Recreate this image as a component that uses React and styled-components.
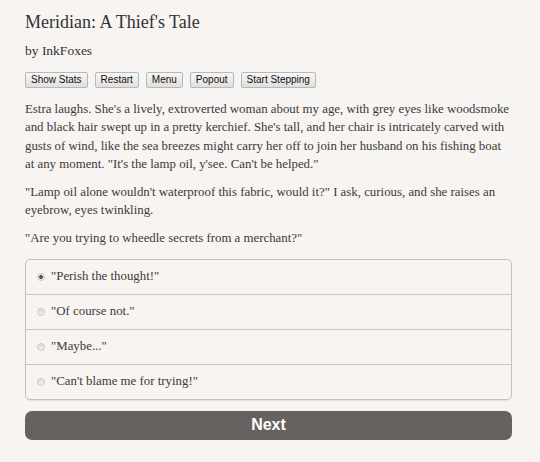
import React from "react";
import styled, { createGlobalStyle } from "styled-components";

const Global = createGlobalStyle`
  html, body { margin: 0; padding: 0; background: #f7f4f1; }
  body { font-family: "Liberation Serif", "Times New Roman", serif; color: #3b3b3b; }
`;

const Page = styled.div`
  padding: 10px 28px 0 25px;
  width: 487px;
`;

const Title = styled.h1`
  font-weight: normal;
  font-size: 18px;
  margin: 0;
  line-height: 24px;
  color: #333;
`;

const Author = styled.h2`
  font-weight: normal;
  font-size: 13.5px;
  margin: 8px 0 0;
  line-height: 18px;
  color: #333;
`;

const Toolbar = styled.div`
  display: flex;
  gap: 7px;
  margin-top: 12px;
`;

const ToolButton = styled.button`
  font-family: "Liberation Sans", Arial, sans-serif;
  font-size: 10px;
  color: #111;
  background: linear-gradient(#f7f7f7, #dfdfdf);
  border: 1px solid #b8b8b8;
  border-radius: 2px;
  padding: 0 5px;
  height: 16px;
  line-height: 14px;
`;

const Para = styled.p`
  font-size: 12.85px;
  line-height: 18.3px;
  margin: ${(p) => (p.$first ? "12px" : "9.5px")} 0 0;
`;

const Choices = styled.div`
  margin-top: 11.5px;
  border: 1px solid #c4c1be;
  border-radius: 5px;
  box-shadow: 0 1px 1px rgba(0,0,0,0.08);
  overflow: hidden;
`;

const Choice = styled.label`
  display: flex;
  align-items: center;
  gap: 6px;
  height: 34px;
  padding-left: 11px;
  font-size: 12.85px;
  border-top: ${(p) => (p.$first ? "none" : "1px solid #c8c5c2")};
  cursor: pointer;
`;

const Radio = styled.span`
  width: 6px;
  height: 6px;
  border-radius: 50%;
  border: 1px solid #cacaca;
  background: ${(p) =>
    p.$checked
      ? "radial-gradient(circle, #555 0 1.6px, #e4e4e4 2.2px)"
      : "linear-gradient(#dcdcdc, #f0f0f0)"};
  flex: none;
`;

const Next = styled.button`
  display: block;
  width: 100%;
  margin-top: 11px;
  height: 29px;
  background: #65625f;
  border: none;
  border-radius: 7px;
  color: #fff;
  font-family: "Liberation Sans", Arial, sans-serif;
  font-weight: bold;
  font-size: 16px;
`;

const choices = [
  '"Perish the thought!"',
  '"Of course not."',
  '"Maybe..."',
  '"Can\'t blame me for trying!"',
];

export default function App() {
  return (
    <>
      <Global />
      <Page>
        <Title>Meridian: A Thief's Tale</Title>
        <Author>by InkFoxes</Author>
        <Toolbar>
          <ToolButton>Show Stats</ToolButton>
          <ToolButton>Restart</ToolButton>
          <ToolButton>Menu</ToolButton>
          <ToolButton>Popout</ToolButton>
          <ToolButton>Start Stepping</ToolButton>
        </Toolbar>
        <Para $first>
          Estra laughs. She's a lively, extroverted woman about my age, with grey eyes like woodsmoke and black hair swept up in a pretty kerchief. She's tall, and her chair is intricately carved with gusts of wind, like the sea breezes might carry her off to join her husband on his fishing boat at any moment. "It's the lamp oil, y'see. Can't be helped."
        </Para>
        <Para>
          "Lamp oil alone wouldn't waterproof this fabric, would it?" I ask, curious, and she raises an eyebrow, eyes twinkling.
        </Para>
        <Para>"Are you trying to wheedle secrets from a merchant?"</Para>
        <Choices>
          {choices.map((c, i) => (
            <Choice key={i} $first={i === 0}>
              <Radio $checked={i === 0} />
              {c}
            </Choice>
          ))}
        </Choices>
        <Next>Next</Next>
      </Page>
    </>
  );
}
